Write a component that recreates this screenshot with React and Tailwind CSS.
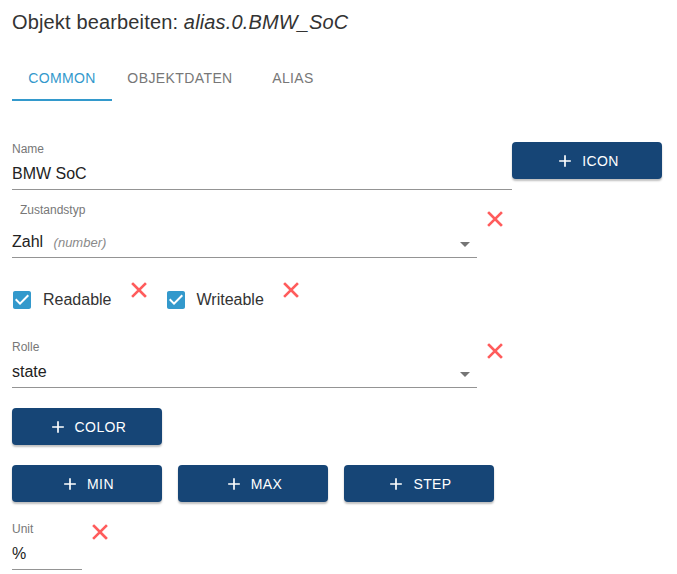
import React from "react";

const font = { fontFamily: "'Liberation Sans', Arial, sans-serif" };

function RedX({ className = "" }) {
  return (
    <svg width="16" height="16" viewBox="0 0 16 16" className={className}>
      <path d="M2 2L14 14M14 2L2 14" stroke="#ff5c5c" strokeWidth="2.6" strokeLinecap="square" />
    </svg>
  );
}

function Arrow() {
  return (
    <svg width="24" height="24" viewBox="0 0 24 24" className="absolute right-0 top-[3px]">
      <path d="M7 10l5 5 5-5z" fill="#757575" />
    </svg>
  );
}

function Check() {
  return (
    <svg width="24" height="24" viewBox="0 0 24 24">
      <path
        d="M19 3H5c-1.11 0-2 .9-2 2v14c0 1.1.89 2 2 2h14c1.11 0 2-.9 2-2V5c0-1.1-.89-2-2-2zm-9 14l-5-5 1.41-1.41L10 14.17l7.59-7.59L19 8l-9 9z"
        fill="#3399cc"
      />
    </svg>
  );
}

function Plus() {
  return (
    <svg width="20" height="20" viewBox="0 0 24 24">
      <path d="M19 13h-6v6h-2v-6H5v-2h6V5h2v6h6v2z" fill="white" />
    </svg>
  );
}

function Btn({ label, className = "" }) {
  return (
    <button
      className={
        "flex items-center justify-center gap-[7px] w-[150px] h-[37px] rounded bg-[#164576] text-white text-sm tracking-[0.4px] shadow-[0_2px_2px_rgba(0,0,0,0.25)] " +
        className
      }
    >
      <Plus />
      <span>{label}</span>
    </button>
  );
}

export default function App() {
  return (
    <div className="w-[677px] h-[574px] overflow-hidden bg-white px-3 text-[#333]" style={font}>
      {/* Title */}
      <div className="mt-[6px] h-8 leading-8 text-xl tracking-[0.15px] text-[#333]">
        Objekt bearbeiten: <i>alias.0.BMW_SoC</i>
      </div>

      {/* Tabs */}
      <div className="mt-[15px] flex h-12 text-sm tracking-[0.4px]">
        <div className="relative flex w-[100px] items-center justify-center pt-[2px] text-[#3399cc]">
          COMMON
          <div className="absolute bottom-0 left-0 h-[2px] w-full bg-[#3399cc]" />
        </div>
        <div className="flex w-[136px] items-center justify-center pt-[2px] text-[#777]">OBJEKTDATEN</div>
        <div className="flex w-[90px] items-center justify-center pt-[2px] text-[#777]">ALIAS</div>
      </div>

      {/* Name + Icon */}
      <div className="mt-[41px] flex items-start">
        <div className="w-[500px]">
          <div className="h-[14px] text-xs leading-[14px] text-[#777]">Name</div>
          <div className="mt-[5px] h-[29px] border-b border-[#949494] text-base leading-[26px] text-[#222]">
            BMW SoC
          </div>
        </div>
        <Btn label="ICON" />
      </div>

      {/* Zustandstyp */}
      <div className="mt-[13px] flex items-start">
        <div className="w-[465px]">
          <div className="h-[14px] pl-2 text-xs leading-[14px] text-[#777]">Zustandstyp</div>
          <div className="relative mt-[12px] h-[29px] border-b border-[#949494] text-base leading-[26px] text-[#222]">
            Zahl <span className="ml-[6px] text-[13px] italic text-[#8a8a8a]">(number)</span>
            <Arrow />
          </div>
        </div>
        <RedX className="ml-[10px] mt-[8px]" />
      </div>

      {/* Checkboxes */}
      <div className="mt-[24px] flex items-start">
        <div className="-ml-[2px] mt-[6px] flex items-center">
          <Check />
          <span className="ml-[9px] text-base text-[#333]">Readable</span>
        </div>
        <RedX className="ml-[19px]" />
        <div className="ml-[17px] mt-[6px] flex items-center">
          <Check />
          <span className="ml-[9px] text-base text-[#333]">Writeable</span>
        </div>
        <RedX className="ml-[19px]" />
      </div>

      {/* Rolle */}
      <div className="mt-[28px] flex items-start">
        <div className="w-[465px]">
          <div className="h-[14px] text-xs leading-[14px] text-[#777]">Rolle</div>
          <div className="relative mt-[5px] h-[29px] border-b border-[#949494] text-base leading-[26px] text-[#222]">
            state
            <Arrow />
          </div>
        </div>
        <RedX className="ml-[10px] mt-[3px]" />
      </div>

      <Btn label="COLOR" className="mt-[20px]" />

      <div className="mt-[20px] flex gap-4">
        <Btn label="MIN" />
        <Btn label="MAX" />
        <Btn label="STEP" />
      </div>

      {/* Unit */}
      <div className="mt-[20px] flex items-start">
        <div className="w-[70px]">
          <div className="h-[14px] text-xs leading-[14px] text-[#777]">Unit</div>
          <div className="mt-[5px] h-[29px] border-b border-[#949494] text-base leading-[26px] text-[#222]">%</div>
        </div>
        <RedX className="ml-[10px] mt-[2px]" />
      </div>
    </div>
  );
}
